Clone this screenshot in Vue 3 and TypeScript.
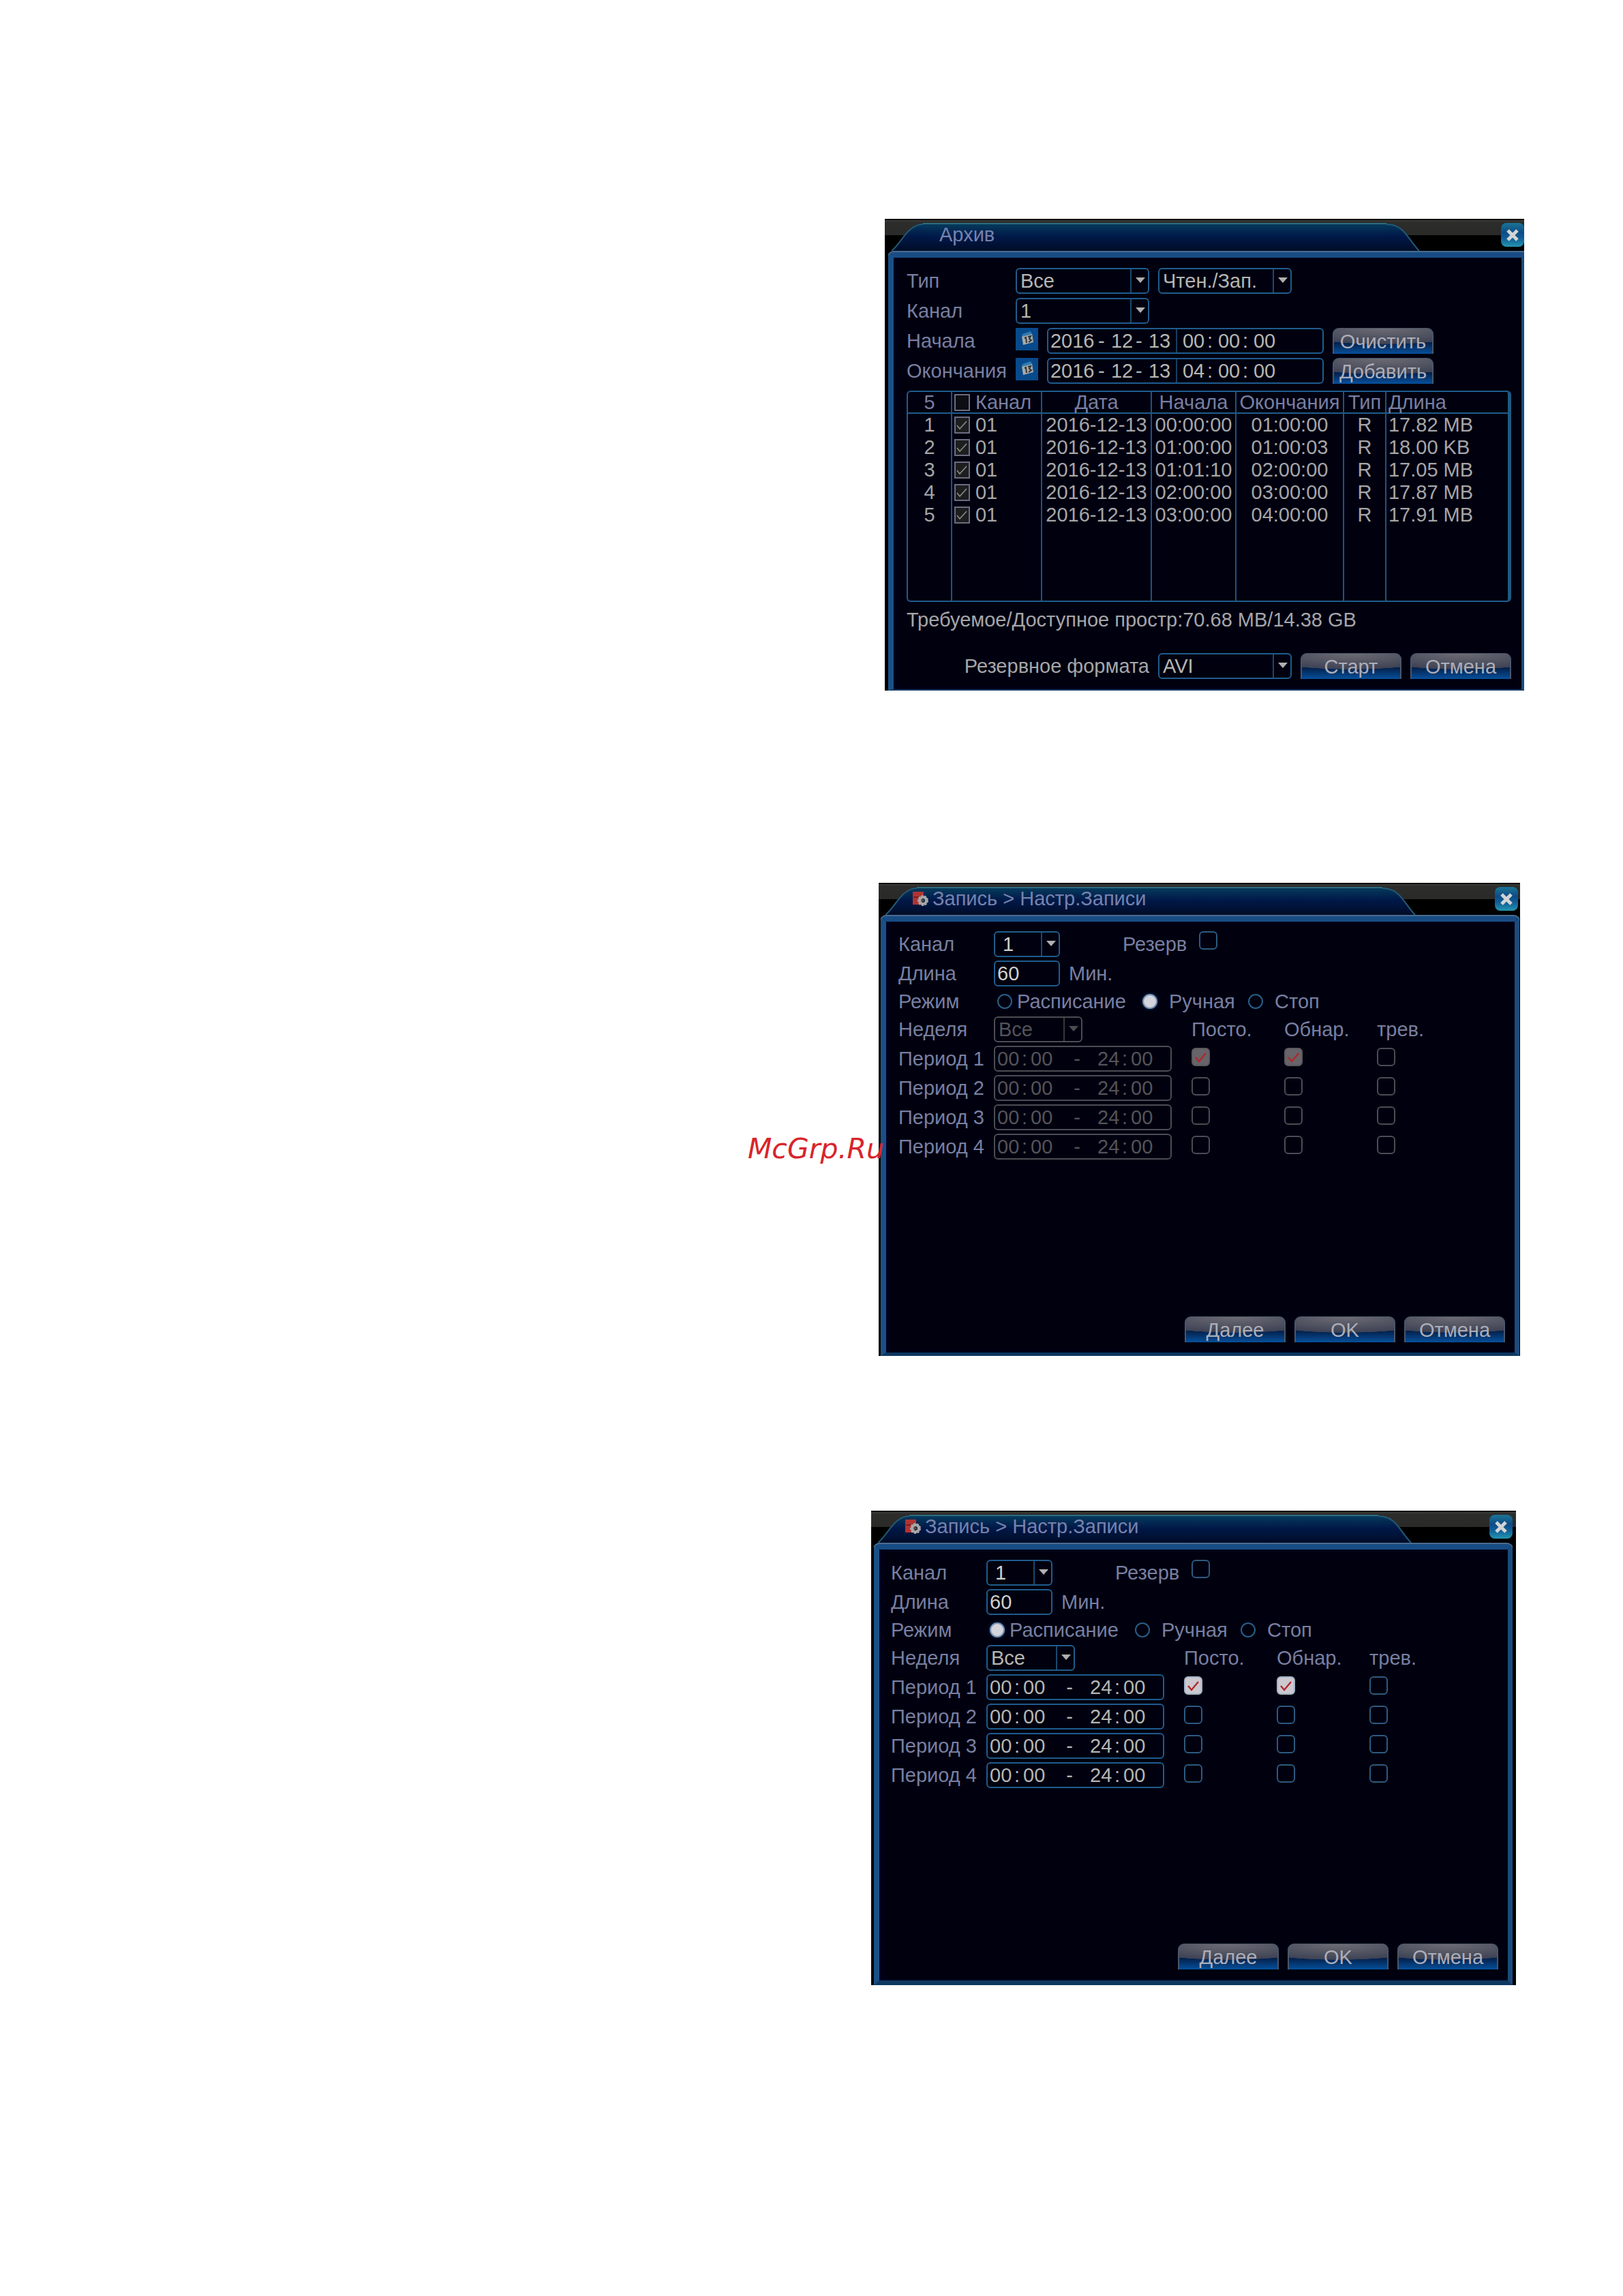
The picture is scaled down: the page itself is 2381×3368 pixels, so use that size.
<script setup lang="ts">
import { reactive } from 'vue'

interface ArchiveRow {
  channel: string
  date: string
  start: string
  end: string
  type: string
  size: string
  picked: boolean
}

interface Stamp {
  id: string
  label: string
  action: string
  date: [string, string, string]
  time: [string, string, string]
}

interface Period {
  range: [string, string, string, string]
  flags: boolean[]
}

interface DvrWindow {
  id: string
  kind: 'archive' | 'record'
  title: string
  locked: boolean
  mode: string
  periods: Period[]
}

const makePeriods = (): Period[] =>
  [1, 2, 3, 4].map((n) => ({
    range: ['00', '00', '24', '00'],
    flags: [n === 1, n === 1, false],
  }))

const windows = reactive<DvrWindow[]>([
  { id: 'archive', kind: 'archive', title: 'Архив', locked: false, mode: '', periods: [] },
  { id: 'manual', kind: 'record', title: 'Запись > Настр.Записи', locked: true, mode: 'Ручная', periods: makePeriods() },
  { id: 'schedule', kind: 'record', title: 'Запись > Настр.Записи', locked: false, mode: 'Расписание', periods: makePeriods() },
])

const stamps = reactive<Stamp[]>([
  { id: 'from', label: 'Начала', action: 'Очистить', date: ['2016', '12', '13'], time: ['00', '00', '00'] },
  { id: 'to', label: 'Окончания', action: 'Добавить', date: ['2016', '12', '13'], time: ['04', '00', '00'] },
])

const rows = reactive<ArchiveRow[]>([
  { channel: '01', date: '2016-12-13', start: '00:00:00', end: '01:00:00', type: 'R', size: '17.82 MB', picked: true },
  { channel: '01', date: '2016-12-13', start: '01:00:00', end: '01:00:03', type: 'R', size: '18.00 KB', picked: true },
  { channel: '01', date: '2016-12-13', start: '01:01:10', end: '02:00:00', type: 'R', size: '17.05 MB', picked: true },
  { channel: '01', date: '2016-12-13', start: '02:00:00', end: '03:00:00', type: 'R', size: '17.87 MB', picked: true },
  { channel: '01', date: '2016-12-13', start: '03:00:00', end: '04:00:00', type: 'R', size: '17.91 MB', picked: true },
])

const modes = ['Расписание', 'Ручная', 'Стоп']
const flagNames = ['Посто.', 'Обнар.', 'трев.']
</script>

<template>
  <main class="page">
    <section v-for="w in windows" :key="w.id" class="window" :class="w.id">
      <header class="bar">
        <svg class="cap" width="46" height="42" viewBox="0 0 46 42" aria-hidden="true">
          <defs>
            <linearGradient :id="w.id + '-tab'" x1="0" y1="0" x2="0" y2="1">
              <stop offset="0" stop-color="#063a5c" />
              <stop offset="0.45" stop-color="#001848" />
              <stop offset="1" stop-color="#000c26" />
            </linearGradient>
          </defs>
          <path d="M0 42C12 32 24 1 46 1V42Z" :fill="`url(#${w.id}-tab)`" />
          <path d="M0 41C14 30 24 2 46 2" fill="none" stroke="#245a74" stroke-width="2" />
        </svg>
        <div class="tab">
          <svg v-if="w.kind === 'record'" class="rec" width="24" height="22" viewBox="0 0 24 22" aria-hidden="true">
            <path d="M1 1H17V7L15 10V20H1Z" fill="#b03434" />
            <path d="M2 9H13" stroke="#7a1c20" stroke-width="2" />
            <circle cx="16" cy="14" r="5" fill="none" stroke="#a8a8a4" stroke-width="4" />
            <circle cx="16" cy="14" r="7" fill="none" stroke="#a8a8a4" stroke-width="2" stroke-dasharray="3 2" />
            <circle cx="16" cy="14" r="2" fill="#40505c" />
          </svg>
          <h2>{{ w.title }}</h2>
        </div>
        <svg class="cap" width="50" height="42" viewBox="0 0 50 42" aria-hidden="true">
          <path d="M0 1C26 1 30 22 48 42H0Z" :fill="`url(#${w.id}-tab)`" />
          <path d="M0 2C26 2 30 22 48 41" fill="none" stroke="#245a74" stroke-width="2" />
        </svg>
        <div class="tail">
          <button class="close" type="button" aria-label="Закрыть">
            <svg width="18" height="18" viewBox="0 0 18 18" aria-hidden="true">
              <path d="M2 2L16 16M16 2L2 16" stroke="#d0d4d4" stroke-width="5" />
            </svg>
          </button>
        </div>
      </header>

      <form v-if="w.kind === 'archive'" class="frame" @submit.prevent>
        <div class="row">
          <label class="name" for="a-type">Тип</label>
          <span class="pick wide">
            <select id="a-type"><option>Все</option></select>
            <svg class="arrow" width="14" height="8" viewBox="0 0 14 8" aria-hidden="true"><path d="M0 0H14L7 8Z" /></svg>
          </span>
          <span class="pick wide">
            <select aria-label="Доступ"><option>Чтен./Зап.</option></select>
            <svg class="arrow" width="14" height="8" viewBox="0 0 14 8" aria-hidden="true"><path d="M0 0H14L7 8Z" /></svg>
          </span>
        </div>
        <div class="row">
          <label class="name" for="a-channel">Канал</label>
          <span class="pick wide">
            <select id="a-channel"><option>1</option></select>
            <svg class="arrow" width="14" height="8" viewBox="0 0 14 8" aria-hidden="true"><path d="M0 0H14L7 8Z" /></svg>
          </span>
        </div>
        <div v-for="s in stamps" :key="s.id" class="row">
          <label class="name" :for="'a-' + s.id">{{ s.label }}</label>
          <button class="calendar" type="button" aria-label="Календарь">
            <svg width="33" height="33" viewBox="0 0 33 33" aria-hidden="true">
              <path d="M9 12L24 8L26 21L11 25Z" fill="#a8aaa8" />
              <path d="M10 9L22 5L24 9L9 13Z" fill="#2f7cb4" />
              <path d="M13 15L15 14L16 22M18 13L22 12L20 16L23 18L19 21" fill="none" stroke="#303436" stroke-width="2" />
            </svg>
          </button>
          <div class="box stamp" role="group" :aria-label="s.label">
            <input :id="'a-' + s.id" v-model="s.date[0]" class="year" type="text" />
            <span class="dash">-</span>
            <input v-model="s.date[1]" type="text" aria-label="Месяц" />
            <span class="dash">-</span>
            <input v-model="s.date[2]" type="text" aria-label="День" />
            <i class="split"></i>
            <input v-model="s.time[0]" type="text" aria-label="Часы" />
            <span class="colon">:</span>
            <input v-model="s.time[1]" type="text" aria-label="Минуты" />
            <span class="colon">:</span>
            <input v-model="s.time[2]" type="text" aria-label="Секунды" />
          </div>
          <button class="btn" type="button">{{ s.action }}</button>
        </div>

        <div class="list">
          <table>
            <colgroup>
              <col class="c1" /><col class="c2" /><col class="c3" /><col class="c4" /><col class="c5" /><col class="c6" /><col />
            </colgroup>
            <thead>
              <tr>
                <th>5</th>
                <th class="left">
                  <label class="mark"><input type="checkbox" />Канал</label>
                </th>
                <th>Дата</th>
                <th>Начала</th>
                <th>Окончания</th>
                <th>Тип</th>
                <th class="left">Длина</th>
              </tr>
            </thead>
            <tbody>
              <tr v-for="(r, i) in rows" :key="i">
                <td>{{ i + 1 }}</td>
                <td class="left">
                  <label class="mark"><input v-model="r.picked" type="checkbox" />{{ r.channel }}</label>
                </td>
                <td>{{ r.date }}</td>
                <td>{{ r.start }}</td>
                <td>{{ r.end }}</td>
                <td>{{ r.type }}</td>
                <td class="left">{{ r.size }}</td>
              </tr>
              <tr class="rest"><td v-for="n in 7" :key="n"></td></tr>
            </tbody>
          </table>
        </div>

        <p class="space">Требуемое/Доступное простр:70.68 MB/14.38 GB</p>

        <footer class="actions">
          <label class="bright" for="a-format">Резервное формата</label>
          <span class="pick wide">
            <select id="a-format"><option>AVI</option></select>
            <svg class="arrow" width="14" height="8" viewBox="0 0 14 8" aria-hidden="true"><path d="M0 0H14L7 8Z" /></svg>
          </span>
          <button class="btn" type="button">Старт</button>
          <button class="btn" type="button">Отмена</button>
        </footer>
      </form>

      <form v-else class="frame" @submit.prevent>
        <div class="row">
          <label class="name" :for="w.id + '-channel'">Канал</label>
          <span class="pick short">
            <select :id="w.id + '-channel'"><option>1</option></select>
            <svg class="arrow" width="14" height="8" viewBox="0 0 14 8" aria-hidden="true"><path d="M0 0H14L7 8Z" /></svg>
          </span>
          <label class="reserve" :for="w.id + '-reserve'">Резерв</label>
          <input :id="w.id + '-reserve'" class="check" type="checkbox" />
        </div>
        <div class="row">
          <label class="name" :for="w.id + '-length'">Длина</label>
          <input :id="w.id + '-length'" class="box length" type="text" value="60" />
          <span class="unit">Мин.</span>
        </div>
        <div class="row modes" role="radiogroup" aria-label="Режим">
          <span class="name">Режим</span>
          <label v-for="m in modes" :key="m" class="mode">
            <input v-model="w.mode" type="radio" :name="w.id + '-mode'" :value="m" />{{ m }}
          </label>
        </div>
        <div class="grid">
          <label :for="w.id + '-week'">Неделя</label>
          <span class="pick week" :class="{ locked: w.locked }">
            <select :id="w.id + '-week'" :disabled="w.locked"><option>Все</option></select>
            <svg class="arrow" width="14" height="8" viewBox="0 0 14 8" aria-hidden="true"><path d="M0 0H14L7 8Z" /></svg>
          </span>
          <span v-for="f in flagNames" :key="f">{{ f }}</span>
        </div>
        <div v-for="(p, i) in w.periods" :key="i" class="grid">
          <label :for="`${w.id}-p${i}`">Период {{ i + 1 }}</label>
          <div class="box period" :class="{ locked: w.locked }" role="group" :aria-label="`Период ${i + 1}`">
            <input :id="`${w.id}-p${i}`" v-model="p.range[0]" type="text" :disabled="w.locked" />
            <span class="colon">:</span>
            <input v-model="p.range[1]" type="text" aria-label="Минуты начала" :disabled="w.locked" />
            <span class="till">-</span>
            <input v-model="p.range[2]" type="text" aria-label="Часы конца" :disabled="w.locked" />
            <span class="colon">:</span>
            <input v-model="p.range[3]" type="text" aria-label="Минуты конца" :disabled="w.locked" />
          </div>
          <input
            v-for="(f, k) in flagNames"
            :key="f"
            v-model="p.flags[k]"
            class="check"
            type="checkbox"
            :aria-label="f"
            :disabled="w.locked"
          />
        </div>
        <footer class="actions">
          <button class="btn" type="button">Далее</button>
          <button class="btn" type="button">OK</button>
          <button class="btn" type="button">Отмена</button>
        </footer>
      </form>
    </section>

    <span class="watermark">McGrp.Ru</span>
  </main>
</template>

<style>
body {
  margin: 0;
  background: #fff;
}
</style>

<style scoped>
*,
*::before,
*::after {
  box-sizing: border-box;
}

.page {
  position: relative;
  padding: 321px 0 456px;
  font-family: "Liberation Sans", Arial, sans-serif;
  font-size: 29px;
  line-height: 34px;
  color: #787fa2;
  display: grid;
}

.window {
  display: flex;
  flex-direction: column;
  background: #000;
}
.archive {
  margin-left: calc(100% * 1298 / 2381);
  margin-right: calc(100% * 145 / 2381);
  min-height: 692px;
}
.manual {
  margin: 282px calc(100% * 151 / 2381) 0 calc(100% * 1289 / 2381);
  min-height: 694px;
}
.schedule {
  margin: 227px calc(100% * 157 / 2381) 0 calc(100% * 1278 / 2381);
  min-height: 696px;
}

/* title bar */
.bar {
  display: flex;
  height: 49px;
  padding: 6px 0 0 10px;
  background: linear-gradient(#080808 0, #080808 2px, #3c3c3a 2px, #2c2c2b 5px, #2a2a29 24px, #000 24px);
}
.cap {
  flex: none;
  display: block;
}
.tab {
  flex: 1;
  display: flex;
  gap: 6px;
  height: 42px;
  padding-left: 24px;
  border-top: 2px solid #2c6c80;
  background: linear-gradient(#063a5c, #001848 45%, #000c26);
}
.manual .tab,
.schedule .tab {
  padding-left: 0;
}
.rec {
  flex: none;
  margin: 4px 0 0 -7px;
}
h2 {
  margin: 0;
  font-size: 29px;
  font-weight: 400;
  line-height: 30px;
  color: #7682ae;
  white-space: nowrap;
}
.tail {
  width: 152px;
  display: flex;
  justify-content: flex-end;
}
.manual .tail {
  padding-right: 3px;
}
.schedule .tail {
  padding-right: 5px;
}
.close {
  display: grid;
  place-items: center;
  width: 34px;
  height: 35px;
  padding: 0;
  border: 0;
  border-radius: 8px;
  background: linear-gradient(#1c7494, #0c4c88 40%, #125e96 65%, #2496b0);
}

/* framed body */
.frame {
  flex: 1;
  display: flex;
  flex-direction: column;
  gap: 6px;
  padding: 15px 15px 15px 19px;
  border-style: solid;
  border-color: #184c84 #1c4c7c #0c3860 #1a5086;
  border-width: 8px 4px 2px 8px;
  border-radius: 8px 0 0 0;
  margin-left: 5px;
  background: #00000f;
  box-shadow: inset 3px 0 6px #000028, 0 -1px 0 1px #4a6c90;
  clip-path: inset(-2px 0 0 0);
}
.manual .frame {
  gap: 5px;
  margin: 0 1px 0 3px;
  padding: 14px 14px 15px 18px;
  border-width: 8px 7px 5px 8px;
  border-radius: 8px 8px 0 0;
}
.schedule .frame {
  gap: 5px;
  margin: 0 5px 0 4px;
  padding: 15px 14px 16px 17px;
  border-width: 8px 7px 7px 8px;
  border-radius: 8px 8px 0 0;
}

.row {
  display: flex;
  align-items: center;
  gap: 13px;
  height: 38px;
}
.name {
  flex: none;
  width: 160px;
  margin-right: -13px;
}
.manual .name,
.schedule .name {
  width: 140px;
}

.box,
select {
  height: 38px;
  border: 2px solid #1f5c8e;
  border-radius: 6px;
  background: #00000f;
  color: #b6b6b2;
  font: inherit;
}
.pick {
  position: relative;
  display: block;
}
.wide {
  width: 196px;
}
.short {
  width: 97px;
}
.week {
  width: 130px;
}
select {
  display: block;
  appearance: none;
  width: 100%;
  padding: 0 28px 0 5px;
  background: linear-gradient(#1a4870, #1a4870) right 24px top / 2px 100% no-repeat #00000f;
  opacity: 1;
}
.short select {
  padding-left: 11px;
  color: #d0d0cc;
}
.arrow {
  position: absolute;
  right: 6px;
  top: 14px;
  fill: #b0b0b0;
  pointer-events: none;
}
.locked select,
.box.locked {
  border-color: #4c4c54;
  color: #545458;
}
.locked select {
  background: linear-gradient(#38383e, #38383e) right 24px top / 2px 100% no-repeat #00000f;
}
.locked .arrow {
  fill: #4c4c50;
}

.stamp,
.period {
  display: flex;
  align-items: center;
  padding-left: 3px;
}
.stamp {
  width: 406px;
}
.period {
  width: 261px;
}
.stamp input,
.period input {
  width: 34px;
  height: 34px;
  padding: 0;
  border: 0;
  background: none;
  color: inherit;
  font: inherit;
}
.stamp .year {
  width: 68px;
}
.dash {
  width: 21px;
}
.stamp .colon {
  width: 18px;
}
.dash,
.stamp .colon {
  padding-left: 2px;
}
.period .colon {
  width: 15px;
  padding-left: 2px;
}
.till {
  width: 64px;
  padding-left: 4px;
  text-align: center;
}
.split {
  width: 2px;
  height: 34px;
  margin: 0 8px 0 6px;
  background: #143e62;
}

.calendar {
  align-self: flex-start;
  width: 33px;
  height: 33px;
  padding: 0;
  border: 0;
  background: #084a8c;
}
.calendar svg {
  display: block;
}

.btn {
  width: 148px;
  height: 38px;
  padding: 0;
  border: 2px solid #4a566c;
  border-width: 1px 2px 0;
  border-radius: 9px 9px 0 0;
  background:
    radial-gradient(ellipse 100% 62% at 50% 0, #6c6c74 0, #3e4254 98%, transparent 100%),
    linear-gradient(#26304a, #04204a 55%, #06509c);
  color: #acaeb8;
  font: inherit;
  line-height: 34px;
}

/* recordings list */
.list {
  margin-top: 4px;
  height: 310px;
  border: 2px solid #1f5c8e;
  border-right: 5px solid #1f5a84;
  border-radius: 6px;
}
table {
  width: 100%;
  height: 100%;
  table-layout: fixed;
  border-collapse: separate;
  border-spacing: 0;
}
.c1 { width: 65px; }
.c2 { width: 132px; }
.c3 { width: 161px; }
.c4 { width: 124px; }
.c5 { width: 158px; }
.c6 { width: 62px; }
th,
td {
  height: 33px;
  padding: 0;
  border-right: 2px solid #22527c;
  font-weight: 400;
  line-height: 29px;
  text-align: center;
  white-space: nowrap;
}
th {
  height: 32px;
  border-bottom: 2px solid #1f5c8e;
}
td {
  color: #a6a6a8;
}
th:last-child,
td:last-child {
  border-right: 0;
}
.left {
  padding-left: 3px;
  text-align: left;
}
.rest td {
  height: auto;
}
.mark {
  display: flex;
  align-items: center;
  gap: 8px;
}
.mark input {
  appearance: none;
  width: 23px;
  height: 25px;
  margin: 0;
  border: 2px solid #6c6c80;
  background: #0c0e14;
}
.mark input:checked {
  background: url("data:image/svg+xml,%3Csvg xmlns='http://www.w3.org/2000/svg' viewBox='0 0 19 21'%3E%3Cpath d='M2 11L6 16L16 5' fill='none' stroke='%238a8e80' stroke-width='1.6'/%3E%3C/svg%3E") center / 100% 100% #1c1e20;
}

.space {
  margin: 3px 0 0;
  color: #a6a6aa;
  white-space: nowrap;
}
.bright {
  color: #a6a6aa;
}
.actions {
  display: flex;
  justify-content: flex-end;
  align-items: center;
  gap: 13px;
  margin-top: auto;
}

/* recording settings */
.reserve {
  width: 112px;
  margin-left: 79px;
  margin-right: -13px;
}
.length {
  width: 97px;
  padding: 0 3px;
  color: #d0d0cc;
}
.check {
  appearance: none;
  align-self: flex-start;
  width: 27px;
  height: 27px;
  margin: 0;
  border: 2px solid #2c5a82;
  border-radius: 6px;
  background: #00000f;
}
.check:checked {
  border-color: #a4b4c8;
  background: url("data:image/svg+xml,%3Csvg xmlns='http://www.w3.org/2000/svg' viewBox='0 0 23 23'%3E%3Cpath d='M4 12L9 18L19 6' fill='none' stroke='%23b02828' stroke-width='2.4'/%3E%3C/svg%3E") center / 100% 100% #ccc8d0;
}
.check:disabled {
  border-color: #4c4c54;
}
.check:disabled:checked {
  border-color: #5c5a5e;
  background-color: #68646a;
}
.modes {
  height: 34px;
  gap: 0;
}
.modes .name {
  margin-right: 5px;
}
.mode {
  display: flex;
  align-items: center;
  gap: 17px;
  width: 155px;
}
.mode:nth-of-type(1) {
  gap: 7px;
  width: 213px;
}
.mode input {
  appearance: none;
  flex: none;
  width: 22px;
  height: 22px;
  margin: 0;
  border: 2px solid #285e88;
  border-radius: 50%;
}
.mode input:checked {
  border-color: #7c94b4;
  background: #d4d4dc;
  box-shadow: 0 0 4px #0c3c6c;
}
.grid {
  display: grid;
  grid-template-columns: 140px 290px repeat(3, 136px);
  align-items: center;
  height: 38px;
}
.grid .check {
  margin-top: 3px;
}

.watermark {
  position: absolute;
  top: 1661px;
  left: calc(100% * 1097 / 2381);
  font-family: "DejaVu Sans", sans-serif;
  font-size: 41px;
  font-style: italic;
  line-height: 48px;
  color: #d8242a;
}
</style>
